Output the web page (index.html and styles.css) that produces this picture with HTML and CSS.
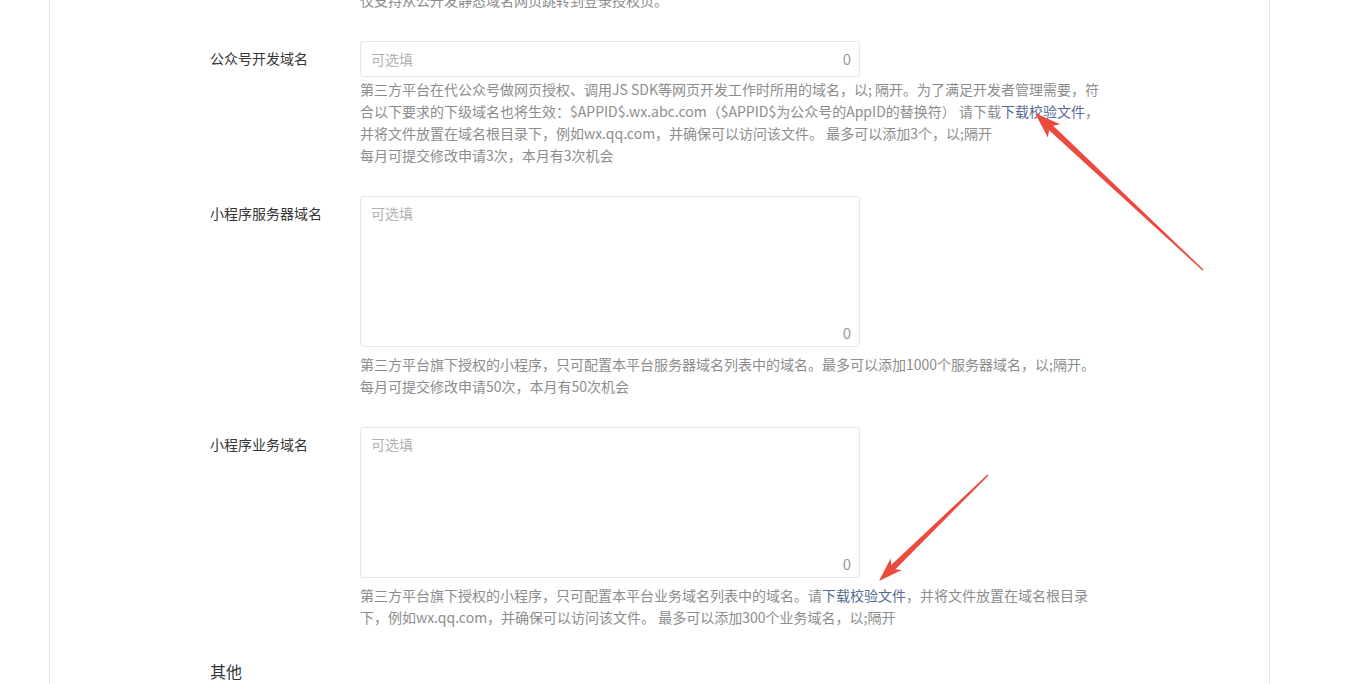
FILE: index.html
```html
<!DOCTYPE html>
<html>
<head>
  <meta charset="utf-8">
  <title>开发配置</title>
  <link rel="stylesheet" href="styles.css">
</head>
<body>

  <div class="card">
    <div class="prev-tail">
      <div class="field-col">
        <p class="desc">仅支持从公开发静态域名网页跳转到登录授权页。</p>
      </div>
    </div>

    <div class="form-row">
      <label class="label">公众号开发域名</label>
      <div class="field-col">
        <div class="field field-line">
          <input class="field-input" type="text" placeholder="可选填">
          <span class="counter">0</span>
        </div>
        <p class="desc">第三方平台在代公众号做网页授权、调用JS SDK等网页开发工作时所用的域名，以; 隔开。为了满足开发者管理需要，符合以下要求的下级域名也将生效：$APPID$.wx.abc.com（$APPID$为公众号的AppID的替换符） 请下载<a class="link" href="#">下载校验文件</a>，并将文件放置在域名根目录下，例如wx.qq.com，并确保可以访问该文件。 最多可以添加3个，以;隔开</p>
        <p class="desc">每月可提交修改申请3次，本月有3次机会</p>
      </div>
    </div>

    <div class="form-row">
      <label class="label">小程序服务器域名</label>
      <div class="field-col">
        <div class="field field-area">
          <textarea class="field-text" placeholder="可选填"></textarea>
          <span class="counter">0</span>
        </div>
        <p class="desc desc-area">第三方平台旗下授权的小程序，只可配置本平台服务器域名列表中的域名。最多可以添加1000个服务器域名，以;隔开。</p>
        <p class="desc">每月可提交修改申请50次，本月有50次机会</p>
      </div>
    </div>

    <div class="form-row">
      <label class="label">小程序业务域名</label>
      <div class="field-col">
        <div class="field field-area">
          <textarea class="field-text" placeholder="可选填"></textarea>
          <span class="counter">0</span>
        </div>
        <p class="desc desc-area">第三方平台旗下授权的小程序，只可配置本平台业务域名列表中的域名。请<a class="link" href="#">下载校验文件</a>，并将文件放置在域名根目录下，例如wx.qq.com，并确保可以访问该文件。 最多可以添加300个业务域名，以;隔开</p>
      </div>
    </div>

    <h3 class="section-title">其他</h3>
  </div>

  <!-- annotation arrows drawn over the page -->
  <svg class="marks" width="1351" height="684" viewBox="0 0 1351 684">
    <polygon fill="#ec4a3e" points="1203.5,269.5 1053.2,125.8 1060.1,124.2 1035,113 1047.8,137.4 1049.1,130.2 1202.5,270.5"/>
    <polygon fill="#ec4a3e" points="988.5,475.5 895.4,569.2 901.8,570.0 879,581 890.6,558.6 891.2,564.9 987.5,474.5"/>
  </svg>

</body>
</html>
```

FILE: styles.css
```css
body {
  margin: 0;
  font-family: "Noto Sans CJK SC", "Noto Sans", sans-serif;
  font-size: 14px;
  color: #353535;
  background-color: #fff;
  overflow: hidden;
}

.card {
  margin-left: 49px;
  width: 1221px;
  box-sizing: border-box;
  border-left: 1px solid #e4e8eb;
  border-right: 1px solid #e4e8eb;
  padding-left: 160px;
  padding-bottom: 40px;
}

.prev-tail {
  margin-top: -11px;
  padding-left: 150px;
  margin-bottom: 30px;
}

.form-row {
  display: flex;
  margin-bottom: 30px;
}

.label {
  width: 150px;
  flex-shrink: 0;
  padding-top: 6px;
  line-height: 22px;
  color: #353535;
}

.field-col {
  width: 740px;
}

.field {
  width: 500px;
  box-sizing: border-box;
  border: 1px solid #e4e8eb;
  border-radius: 3px;
  background-color: #fff;
}

.field-line {
  height: 36px;
  display: flex;
  align-items: center;
  padding: 0 8px 0 10px;
}

.field-area {
  height: 151px;
  display: flex;
  flex-direction: column;
  padding: 5px 8px 2px 10px;
}

.field-input,
.field-text {
  border: none;
  outline: none;
  padding: 0;
  margin: 0;
  font-family: inherit;
  font-size: 14px;
  line-height: 22px;
  color: #353535;
  background: transparent;
}

.field-input {
  flex: 1;
}

.field-text {
  flex: 1;
  resize: none;
}

.field-input::placeholder,
.field-text::placeholder {
  color: #b2b2b2;
}

.counter {
  color: #9a9a9a;
  font-size: 15px;
  line-height: 22px;
  text-align: right;
}

.desc {
  margin: 0;
  line-height: 22px;
  color: #8d8d8d;
}

.field + .desc {
  margin-top: 1px;
}

.field + .desc-area {
  margin-top: 6px;
}

.link {
  color: #576b95;
  text-decoration: none;
}

.section-title {
  margin: 31px 0 0;
  font-size: 16px;
  font-weight: normal;
  line-height: 24px;
  color: #353535;
}

.marks {
  position: absolute;
  top: 0;
  left: 0;
  pointer-events: none;
}
```
